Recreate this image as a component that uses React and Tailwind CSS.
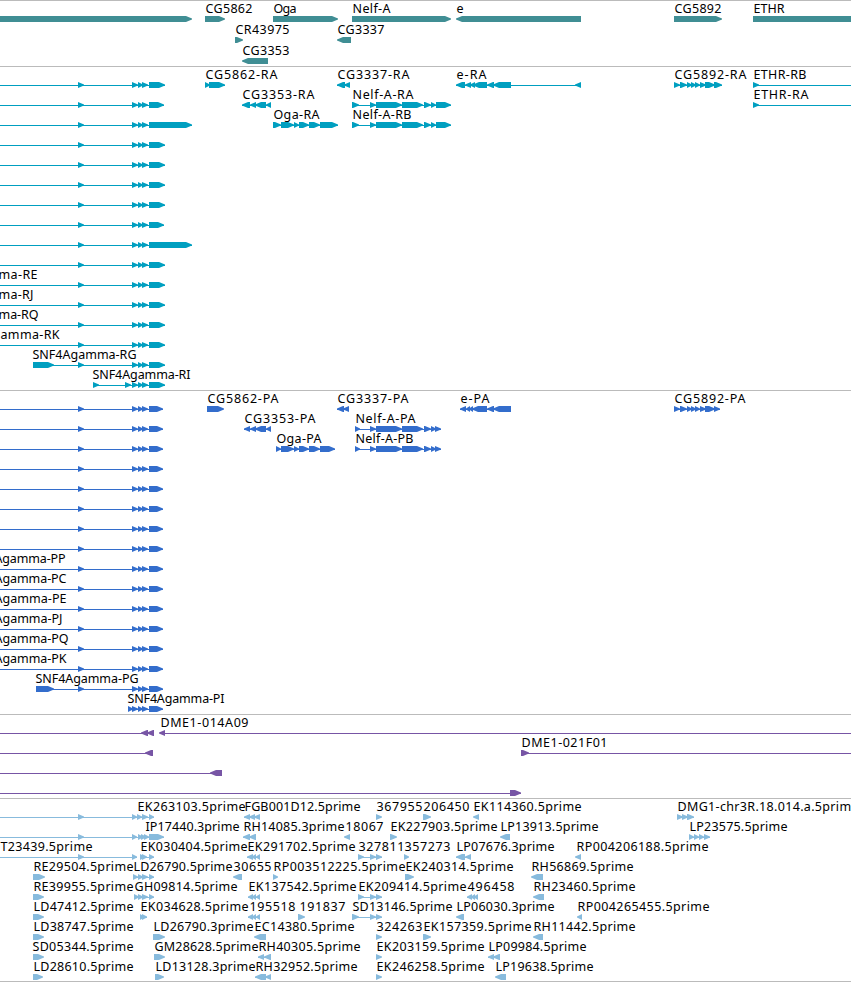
const WIDTH = 851;

// feature: [row, direction, exons, label, labelStart, labelEnd, lineStart, lineEnd]
const snfExons = [[78, 84], [132, 138], [138, 143], [142, 148]];

const snfRow = (row, end, label, from, to) => [
  row, "r", [...snfExons, [149, end]], label, from, to, 0,
];

const nelfExons = [[370, 376], [376, 402], [402, 423], [424, 431], [431, 436]];
const cg5892Exons = [[674, 680], [680, 687], [687, 692], [691, 696], [695, 700], [700, 706], [705, 715]];
const ogaExons = [[281, 294], [294, 299], [299, 309], [309, 320]];

const genes = [
  [0, "r", [[-10, 192]]],
  [0, "r", [[205, 225]], "CG5862", 205, 253],
  [0, "r", [[273, 338]], "Oga", 273, 297],
  [0, "r", [[352, 451]], "Nelf-A", 352, 391],
  [0, "l", [[456, 581]], "e", 456, 463],
  [0, "r", [[674, 722]], "CG5892", 674, 722],
  [0, "r", [[753, 870]], "ETHR", 753, 785],
  [1, "r", [[235, 243]], "CR43975", 235, 290],
  [1, "l", [[337, 351]], "CG3337", 337, 385],
  [2, "l", [[242, 268]], "CG3353", 242, 290],
];

const transcripts = [
  snfRow(0, 165),
  snfRow(1, 164),
  snfRow(2, 192),
  snfRow(3, 165),
  snfRow(4, 165),
  snfRow(5, 165),
  snfRow(6, 165),
  snfRow(7, 164),
  snfRow(8, 192),
  snfRow(9, 165),
  snfRow(10, 165, "ma-RE", -2, 38),
  snfRow(11, 165, "ma-RJ", -2, 34),
  snfRow(12, 165, "ma-RQ", -2, 39),
  snfRow(13, 165, "amma-RK", 0, 60),
  [14, "r", [[33, 54], ...snfExons, [149, 165]], "SNF4Agamma-RG", 32, 137],
  [15, "r", [[93, 99], [125, 131], ...snfExons.slice(1), [149, 165]], "SNF4Agamma-RI", 92, 191],
  [0, "r", [[205, 210], [209, 225]], "CG5862-RA", 205, 278],
  [0, "l", [[337, 345], [344, 350]], "CG3337-RA", 337, 410],
  [0, "l", [[456, 465], [465, 471], [470, 475], [473, 487], [487, 494], [493, 511], [575, 581]], "e-RA", 456, 487],
  [0, "r", [...cg5892Exons, [714, 722]], "CG5892-RA", 674, 747],
  [0, "r", [[753, 759]], "ETHR-RB", 753, 807, 753, WIDTH],
  [1, "l", [[242, 250], [250, 256], [255, 266], [266, 271]], "CG3353-RA", 242, 315],
  [1, "r", [[352, 359], ...nelfExons, [436, 451]], "Nelf-A-RA", 352, 414],
  [1, "r", [[753, 759]], "ETHR-RA", 753, 809, 753, WIDTH],
  [2, "r", [[273, 281], ...ogaExons, [320, 338]], "Oga-RA", 273, 320],
  [2, "r", [[352, 359], ...nelfExons, [436, 451]], "Nelf-A-RB", 352, 412],
];

const translations = [
  ...[0, 1, 2, 3, 4, 5, 6, 7].map((row) => snfRow(row, 163)),
  snfRow(8, 163, "Agamma-PP", -6, 66),
  snfRow(9, 163, "Agamma-PC", -6, 67),
  snfRow(10, 163, "Agamma-PE", -6, 67),
  snfRow(11, 163, "Agamma-PJ", -6, 63),
  snfRow(12, 163, "Agamma-PQ", -6, 69),
  snfRow(13, 163, "Agamma-PK", -6, 67),
  [14, "r", [[36, 54], ...snfExons, [149, 163]], "SNF4Agamma-PG", 35, 139],
  [15, "r", [[128, 133], ...snfExons.slice(1), [149, 163]], "SNF4Agamma-PI", 127, 225],
  [0, "r", [[207, 224]], "CG5862-PA", 207, 279],
  [0, "l", [[337, 344], [343, 349]], "CG3337-PA", 337, 409],
  [0, "l", [[460, 466], [466, 470], [469, 473], [472, 487], [487, 494], [493, 511]], "e-PA", 460, 490],
  [0, "r", [...cg5892Exons, [714, 720]], "CG5892-PA", 674, 746],
  [1, "l", [[244, 250], [250, 256], [255, 266], [266, 271]], "CG3353-PA", 244, 316],
  [1, "r", [[355, 360], ...nelfExons, [435, 441]], "Nelf-A-PA", 355, 416],
  [2, "r", [[276, 281], ...ogaExons, [320, 335]], "Oga-PA", 276, 322],
  [2, "r", [[355, 360], ...nelfExons, [435, 441]], "Nelf-A-PB", 355, 414],
];

const bacs = [
  [0, "l", [[141, 148], [147, 154]], null, 0, 0, 0],
  [0, "l", [[159, 165]], "DME1-014A09", 160, 249, 160, WIDTH],
  [1, "l", [[145, 153]], null, 0, 0, 0],
  [1, "r", [[521, 529]], "DME1-021F01", 521, 608, 521, WIDTH],
  [2, "l", [[210, 222]], null, 0, 0, 0],
  [3, "r", [[510, 521]], null, 0, 0, 0],
];

const trio = [[252, 256], [256, 260]];
const pair = [[370, 376], [376, 382]];
const tail = [[138, 143], [142, 148], [149, 154]];

const ests = [
  [0, "r", [[78, 84], [132, 137], [137, 142], [142, 148], [149, 154]], "EK263103.5prime", 137, 246, 0],
  [0, "l", [[244, 250], [249, 255], [254, 260]], "FGB001D12.5prime", 244, 361],
  [0, "r", [[376, 382]], "367955", 376, 423],
  [0, "r", [[423, 431]], "206450", 423, 470],
  [0, "l", [[473, 479]], "EK114360.5prime", 473, 582],
  [0, "r", [[677, 683], [682, 688], [687, 694]], "DMG1-chr3R.18.014.a.5prime", 677, 859],
  [1, "r", [[78, 84], [132, 137], [138, 143], [141, 146], [144, 149], [149, 164]], "IP17440.3prime", 145, 240, 0],
  [1, "l", [[243, 250], [249, 256]], "RH14085.3prime", 243, 345],
  [1, "l", [[344, 350]], "18067", 345, 384],
  [1, "r", [[390, 397]], "EK227903.5prime", 390, 498],
  [1, "l", [[500, 510]], "LP13913.5prime", 500, 599],
  [1, "r", [[689, 694], [694, 699], [699, 704], [704, 710]], "LP23575.5prime", 689, 788],
  [2, "r", [[78, 84], [132, 137]], "T23439.5prime", 0, 93, 0],
  [2, "r", [[140, 145], [142, 147], [149, 154]], "EK030404.5prime", 140, 248],
  [2, "l", [[247, 253], ...trio], "EK291702.5prime", 247, 356],
  [2, "r", [[358, 364], ...pair], "327811", 358, 405],
  [2, "r", [[404, 409]], "357273", 404, 451],
  [2, "l", [[456, 465], [465, 471]], "LP07676.3prime", 456, 555],
  [2, "l", [[575, 581]], "RP004206188.5prime", 576, 709],
  [3, "r", [[33, 45]], "RE29504.5prime", 33, 134],
  [3, "r", [[133, 138], ...tail], "LD26790.5prime", 133, 233],
  [3, "l", [[233, 242]], "30655", 233, 272],
  [3, "r", [[273, 278]], "RP003512225.5prime", 273, 406],
  [3, "r", [[405, 414]], "EK240314.5prime", 405, 514],
  [3, "l", [[531, 543]], "RH56869.5prime", 531, 634],
  [4, "r", [[33, 44]], "RE39955.5prime", 33, 134],
  [4, "r", [[134, 139], ...tail], "GH09814.5prime", 134, 238],
  [4, "l", [[248, 253], ...trio], "EK137542.5prime", 248, 357],
  [4, "r", [[358, 364], ...pair], "EK209414.5prime", 358, 467],
  [4, "l", [[467, 472], [471, 475], [474, 478]], "496458", 467, 515],
  [4, "l", [[533, 544]], "RH23460.5prime", 533, 636],
  [5, "r", [[33, 44]], "LD47412.5prime", 33, 134],
  [5, "r", [[140, 144], [142, 147]], "EK034628.5prime", 140, 249],
  [5, "l", [[248, 253], ...trio], "195518", 249, 296],
  [5, "r", [[298, 305]], "191837", 299, 346],
  [5, "r", [[352, 359], ...pair], "SD13146.5prime", 352, 453],
  [5, "l", [[456, 464]], "LP06030.3prime", 456, 555],
  [5, "l", [[577, 582]], "RP004265455.5prime", 577, 710],
  [6, "r", [[33, 44]], "LD38747.5prime", 33, 134],
  [6, "r", [[153, 165]], "LD26790.3prime", 153, 254],
  [6, "l", [[254, 266]], "EC14380.5prime", 254, 355],
  [6, "r", [[376, 382]], "324263", 376, 423],
  [6, "r", [[423, 431]], "EK157359.5prime", 423, 532],
  [6, "l", [[533, 543]], "RH11442.5prime", 533, 636],
  [7, "r", [[33, 44]], "SD05344.5prime", 32, 134],
  [7, "r", [[154, 165]], "GM28628.5prime", 154, 259],
  [7, "l", [[258, 264], [264, 271]], "RH40305.5prime", 258, 361],
  [7, "r", [[376, 382]], "EK203159.5prime", 376, 485],
  [7, "l", [[488, 494], [493, 500]], "LP09984.5prime", 488, 587],
  [8, "r", [[33, 43]], "LD28610.5prime", 33, 134],
  [8, "r", [[155, 164]], "LD13128.3prime", 155, 256],
  [8, "l", [[255, 266], [265, 271]], "RH32952.5prime", 255, 358],
  [8, "r", [[376, 382]], "EK246258.5prime", 376, 485],
  [8, "l", [[495, 506]], "LP19638.5prime", 495, 594],
];

const tracks = [
  { id: "genes", features: genes, height: 65, pitch: 21, color: "text-[#408e94]" },
  { id: "transcripts", features: transcripts, height: 323, pitch: 20, color: "text-[#009fc0]" },
  { id: "translations", features: translations, height: 323, pitch: 20, color: "text-[#336dcc]" },
  { id: "bacs", features: bacs, height: 83, pitch: 20, color: "text-[#7755a5]" },
  { id: "ests", features: ests, height: 182, pitch: 20, color: "text-[#88bbdd]" },
];

function Exon({ from, to, dir, y }) {
  const head = Math.min(6, to - from);
  const points =
    dir === "r"
      ? `${from},${y} ${to - head},${y} ${to},${y + 2.5} ${to},${y + 3.5} ${to - head},${y + 6} ${from},${y + 6}`
      : `${to},${y} ${from + head},${y} ${from},${y + 2.5} ${from},${y + 3.5} ${from + head},${y + 6} ${to},${y + 6}`;
  return <polygon points={points} fill="currentColor" />;
}

function Feature({ feature, pitch }) {
  const [row, dir, exons, label, labelStart, labelEnd, lineStart, lineEnd] = feature;
  const top = row * pitch;
  const start = lineStart ?? exons[0][0];
  const end = lineEnd ?? exons[exons.length - 1][1];
  return (
    <g>
      {(exons.length > 1 || lineStart !== undefined) && (
        <rect x={start} y={top + 18} width={end - start} height={1} fill="currentColor" />
      )}
      {exons.map(([from, to]) => (
        <Exon key={from} from={from} to={to} dir={dir} y={top + 15} />
      ))}
      {label && (
        <text
          x={labelStart + 0.5}
          y={top + 12}
          textLength={labelEnd - labelStart - 1}
          className="fill-black"
        >
          {label}
        </text>
      )}
    </g>
  );
}

function Track({ features, height, pitch, color }) {
  return (
    <section className="border-t border-[#bbbbbb]">
      <svg
        width={WIDTH}
        height={height}
        className={`block overflow-hidden font-['Noto_Sans',sans-serif] text-[12.5px] ${color}`}
      >
        {features.map((feature, i) => (
          <Feature key={i} feature={feature} pitch={pitch} />
        ))}
      </svg>
    </section>
  );
}

export default function App() {
  return (
    <main className="flex w-[851px] flex-col overflow-hidden border-b border-[#bbbbbb] bg-white">
      {tracks.map((track) => (
        <Track key={track.id} {...track} />
      ))}
    </main>
  );
}
